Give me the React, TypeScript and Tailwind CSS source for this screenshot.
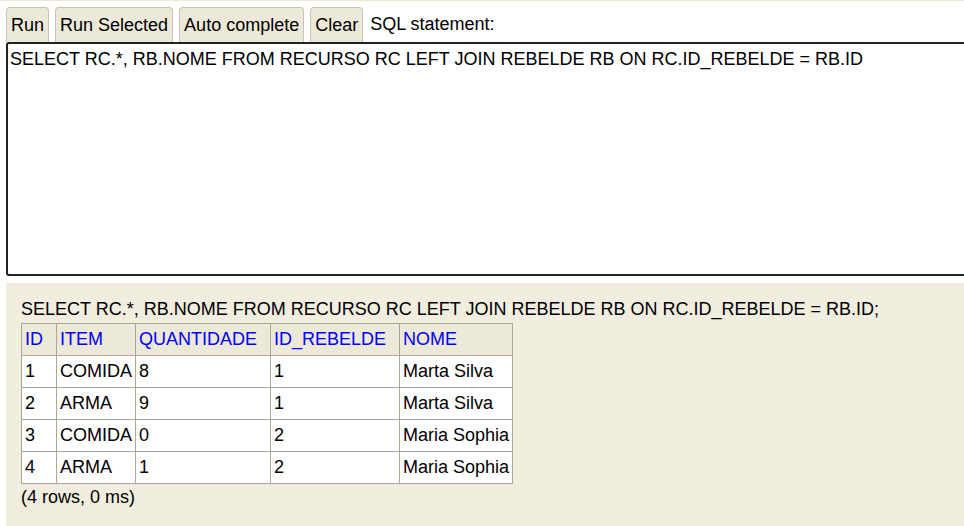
import React from 'react';

const sql = 'SELECT RC.*, RB.NOME FROM RECURSO RC LEFT JOIN REBELDE RB ON RC.ID_REBELDE = RB.ID';

const columns = ['ID', 'ITEM', 'QUANTIDADE', 'ID_REBELDE', 'NOME'];

const rows = [
  ['1', 'COMIDA', '8', '1', 'Marta Silva'],
  ['2', 'ARMA', '9', '1', 'Marta Silva'],
  ['3', 'COMIDA', '0', '2', 'Maria Sophia'],
  ['4', 'ARMA', '1', '2', 'Maria Sophia'],
];

const buttons = ['Run', 'Run Selected', 'Auto complete', 'Clear'];

export default function App() {
  return (
    <div className="w-[964px] h-[526px] overflow-hidden bg-white text-[18px] leading-[21px] text-black font-['Liberation_Sans',Arial,sans-serif]">
      <div className="h-px bg-[#ece9d8]" />

      {/* Toolbar */}
      <div className="flex items-end gap-[6px] pl-[6px] pt-[6px]">
        {buttons.map((label) => (
          <button
            key={label}
            className="h-[35px] px-[4px] bg-[#ece9d8] border border-[#c8c5b8] border-b-0 rounded-t-[4px] text-black"
          >
            {label}
          </button>
        ))}
        <span className="pb-[7px] pl-px">SQL statement:</span>
      </div>

      {/* Editor */}
      <div className="ml-[6px] w-[990px] h-[234px] border-2 border-[#222] rounded-[3px] px-[2px] pt-[5px]">
        {sql}
      </div>

      {/* Result */}
      <div className="ml-[6px] mt-[7px] h-[260px] bg-[#f1eee0] pl-[15px] pt-[16px]">
        <div className="pb-[3px]">{sql};</div>
        <table className="border-collapse">
          <thead>
            <tr className="bg-[#ece9d8]">
              {columns.map((c) => (
                <th
                  key={c}
                  className="border border-[#aca899] text-left font-normal text-[#0000ff] pl-[3px] pr-[13px] py-[5px]"
                >
                  {c}
                </th>
              ))}
            </tr>
          </thead>
          <tbody>
            {rows.map((r, i) => (
              <tr key={i} className="bg-white">
                {r.map((v, j) => (
                  <td key={j} className="border border-[#aca899] px-[3px] py-[5px]">
                    {v}
                  </td>
                ))}
              </tr>
            ))}
          </tbody>
        </table>
        <div className="pt-[3px]">(4 rows, 0 ms)</div>
      </div>
    </div>
  );
}
